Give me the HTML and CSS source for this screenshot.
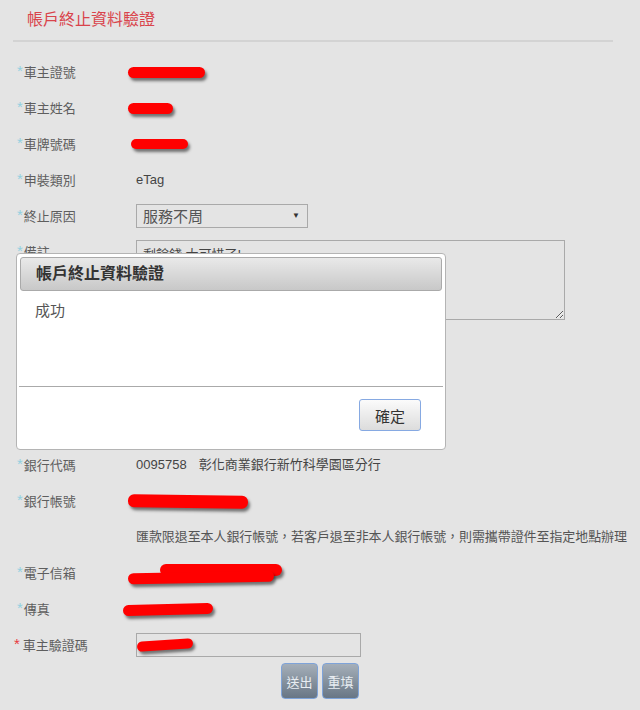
FILE: index.html
```html
<!DOCTYPE html>
<html lang="zh-Hant">
<head>
    <meta charset="UTF-8">
    <meta name="viewport" content="width=device-width, initial-scale=1.0">
    <title>帳戶終止資料驗證</title>
    <link rel="stylesheet" href="styles.css">
</head>
<body>
    <div class="page">
        <h2 class="page-title">帳戶終止資料驗證</h2>
        <div class="form">
            <div class="row">
                <div class="label"><span class="star">*</span>車主證號</div>
                <div class="value"><span class="redact r-id"></span></div>
            </div>
            <div class="row">
                <div class="label"><span class="star">*</span>車主姓名</div>
                <div class="value"><span class="redact r-name"></span></div>
            </div>
            <div class="row">
                <div class="label"><span class="star">*</span>車牌號碼</div>
                <div class="value"><span class="redact r-plate"></span></div>
            </div>
            <div class="row">
                <div class="label"><span class="star">*</span>申裝類別</div>
                <div class="value">eTag</div>
            </div>
            <div class="row">
                <div class="label"><span class="star">*</span>終止原因</div>
                <div class="value">
                    <div class="select-box">
                        <select class="select">
                            <option>服務不周</option>
                        </select>
                    </div>
                </div>
            </div>
            <div class="row row-top">
                <div class="label"><span class="star">*</span>備註</div>
                <div class="value">
                    <textarea class="memo">剩餘錢 太可惜了!</textarea>
                </div>
            </div>
            <div class="row">
                <div class="label"><span class="star">*</span>退款方式</div>
                <div class="value">匯款</div>
            </div>
            <div class="row">
                <div class="label"><span class="star">*</span>戶名</div>
                <div class="value"></div>
            </div>
            <div class="row row-tall">
                <div class="label"><span class="star">*</span>身分證號</div>
                <div class="value"></div>
            </div>
            <div class="row">
                <div class="label"><span class="star">*</span>銀行代碼</div>
                <div class="value">0095758<span class="bank-name">彰化商業銀行新竹科學園區分行</span></div>
            </div>
            <div class="row">
                <div class="label"><span class="star">*</span>銀行帳號</div>
                <div class="value"><span class="redact r-account"></span></div>
            </div>
            <div class="row">
                <div class="label"></div>
                <div class="value note">匯款限退至本人銀行帳號，若客戶退至非本人銀行帳號，則需攜帶證件至指定地點辦理</div>
            </div>
            <div class="row">
                <div class="label"><span class="star">*</span>電子信箱</div>
                <div class="value">
                    <div class="redact-pair">
                        <span class="redact r-mail-top"></span>
                        <span class="redact r-mail-bottom"></span>
                    </div>
                </div>
            </div>
            <div class="row">
                <div class="label"><span class="star">*</span>傳真</div>
                <div class="value"><span class="redact r-fax"></span></div>
            </div>
            <div class="row">
                <div class="label required"><span class="star">*</span>車主驗證碼</div>
                <div class="value">
                    <div class="input-box"><span class="redact r-code"></span></div>
                </div>
            </div>
        </div>
        <div class="actions">
            <button class="btn">送出</button>
            <button class="btn">重填</button>
        </div>
    </div>

    <div class="dialog">
        <div class="dialog-title">帳戶終止資料驗證</div>
        <div class="dialog-body">成功</div>
        <div class="dialog-footer">
            <button class="ok-button">確定</button>
        </div>
    </div>
</body>
</html>
```

FILE: styles.css
```css
body {
    margin: 0;
    padding: 0;
    background-color: #e4e4e4;
    font-family: "Liberation Sans", "Noto Sans CJK TC", sans-serif;
    font-size: 13px;
    color: #555;
}

.page {
    width: 640px;
}

.page-title {
    margin: 0 0 0 13px;
    width: 600px;
    padding: 9px 14px;
    box-sizing: border-box;
    font-size: 16px;
    line-height: 22px;
    font-weight: normal;
    color: #d9434b;
    border-bottom: 2px solid #d3d3d3;
}

.form {
    margin: 12px 0 0 13px;
    width: 620px;
}

.row {
    display: grid;
    grid-template-columns: 123px 1fr;
    align-items: center;
    height: 36px;
}

.row-top {
    align-items: start;
    height: auto;
    padding: 6px 0;
}

.row-tall {
    height: 49px;
}

.label {
    padding-left: 4px;
    line-height: 20px;
    color: #5e5e5e;
    white-space: nowrap;
}

.label.required {
    margin-left: -3px;
}

.star {
    color: #93d0e0;
    font-size: 15px;
    margin-right: 1px;
    vertical-align: 1px;
}

.required .star {
    color: #e8383d;
    margin-right: 3px;
}

.row-top .label {
    padding-top: 1px;
}

.value {
    color: #444;
    line-height: 20px;
    white-space: nowrap;
}

.bank-name {
    margin-left: 12px;
}

.note {
    color: #555;
    letter-spacing: -0.08px;
}

.redact {
    display: block;
    height: 11px;
    background-color: #ff0000;
    border-radius: 6px;
    box-shadow: 2px 3px 3px rgba(0, 0, 0, 0.5);
}

.r-id {
    margin-left: -8px;
    width: 77px;
}

.r-name {
    margin-left: -8px;
    width: 45px;
}

.r-plate {
    margin-left: -5px;
    width: 57px;
    height: 10px;
}

.r-account {
    margin-left: -8px;
    width: 120px;
    height: 13px;
    transform: rotate(0.8deg);
}

.redact-pair {
    display: flex;
    flex-direction: column;
}

.r-mail-top {
    margin-left: 24px;
    width: 122px;
    height: 12px;
}

.r-mail-bottom {
    margin: -4px 0 0 -8px;
    width: 146px;
    height: 11px;
    transform: rotate(-1deg);
}

.r-fax {
    margin-left: -13px;
    width: 90px;
    transform: rotate(-1.5deg);
}

.r-code {
    margin-left: 0;
    width: 56px;
    height: 10px;
    transform: rotate(-4deg);
}

.select-box {
    position: relative;
    width: 172px;
}

.select-box::after {
    content: "▼";
    position: absolute;
    right: 8px;
    top: 7px;
    font-size: 8px;
    line-height: 10px;
    color: #333;
}

.select {
    appearance: none;
    width: 172px;
    height: 24px;
    margin: 0;
    padding: 0 6px;
    border: 1px solid #a9a9a9;
    border-radius: 0;
    background-color: transparent;
    font-family: inherit;
    font-size: 15px;
    color: #555;
}

.memo {
    display: block;
    width: 429px;
    height: 80px;
    margin: 0;
    padding: 3px 6px;
    box-sizing: border-box;
    border: 1px solid #a9a9a9;
    background-color: transparent;
    font-family: inherit;
    font-size: 13px;
    color: #444;
}

.input-box {
    width: 225px;
    height: 24px;
    box-sizing: border-box;
    border: 1px solid #a9a9a9;
    display: flex;
    align-items: center;
}

.actions {
    display: flex;
    justify-content: center;
    gap: 4px;
}

.btn {
    width: 37px;
    height: 36px;
    padding: 0;
    border: 1px solid #7ea3d9;
    border-radius: 4px;
    background: linear-gradient(#a5afb9, #687685);
    color: #e8edf2;
    font-family: inherit;
    font-size: 13px;
}

/* 訊息視窗 */
.dialog {
    position: absolute;
    left: 16px;
    top: 253px;
    width: 430px;
    box-sizing: border-box;
    padding: 3px;
    background-color: white;
    border: 1px solid #b4b4b4;
    border-radius: 4px;
}

.dialog-title {
    height: 34px;
    box-sizing: border-box;
    padding-left: 15px;
    line-height: 32px;
    border: 1px solid #aaa;
    border-radius: 3px;
    background: linear-gradient(#e9e9e9, #c8c8c8);
    color: #333;
    font-size: 16px;
    font-weight: bold;
}

.dialog-body {
    height: 95px;
    box-sizing: border-box;
    padding: 9px 15px;
    font-size: 15px;
    line-height: 22px;
    color: #555;
}

.dialog-footer {
    margin: 0 -1px;
    border-top: 1px solid #aaa;
    padding: 12px 22px 15px;
    display: flex;
    justify-content: flex-end;
}

.ok-button {
    width: 62px;
    height: 32px;
    padding: 0;
    border: 1px solid #86a9e2;
    border-radius: 3px;
    background: linear-gradient(#fbfbfb, #dcdcdc);
    color: #333;
    font-family: inherit;
    font-size: 15px;
}
```
